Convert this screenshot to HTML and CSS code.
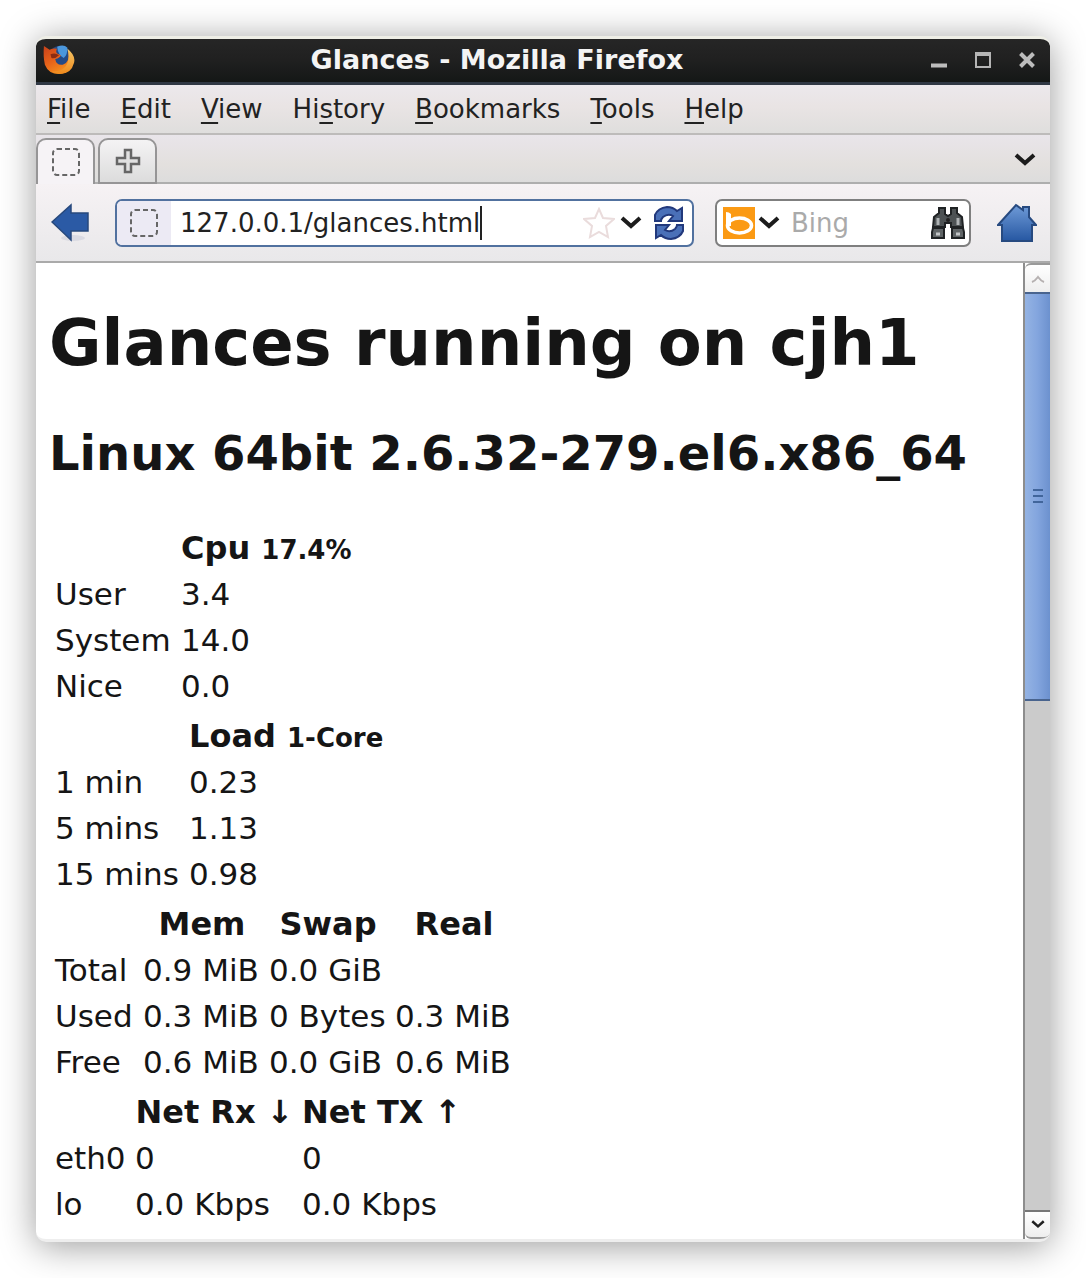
FILE: index.html
```html
<!DOCTYPE html>
<html lang="en">
<head>
<meta charset="utf-8">
<title>Glances - Mozilla Firefox</title>
<link rel="stylesheet" href="styles.css">
</head>
<body>
<div class="window">
  <header class="titlebar">
    <svg class="app-icon" width="32" height="32" viewBox="0 0 34 34" aria-hidden="true">
      <defs>
        <linearGradient id="fox" x1="0" y1="0" x2="0.6" y2="1"><stop offset="0" stop-color="#c8401a"/><stop offset="0.55" stop-color="#e8641a"/><stop offset="1" stop-color="#f5941e"/></linearGradient>
        <linearGradient id="tail" x1="0" y1="0" x2="0" y2="1"><stop offset="0" stop-color="#f3c566"/><stop offset="1" stop-color="#f08a1c"/></linearGradient>
      </defs>
      <circle cx="18" cy="14" r="12" fill="#244a86"/>
      <path d="M15 3q7-3 11 1q0 8-4 11q-6-3-7-12z" fill="#4b97dc"/>
      <path d="M1 2l6 4q4-2 8-1q-2 3 0 5l4 2q-1 3-6 4q1 7 8 6q8-2 6-15q6 8 3 15q-4 10-13 10q-11 0-15-10q-2-9-1-20z" fill="url(#fox)"/>
      <path d="M26 5q9 7 7 15q-3 12-15 12q-5 0-9-3q10 1 15-5q5-7 2-19z" fill="url(#tail)"/>
      <path d="M8 11q5-2 9 1q-4 4-8 3z" fill="#8c2c12"/>
    </svg>
    <h1 class="window-title">Glances - Mozilla Firefox</h1>
    <div class="window-controls">
      <button type="button" aria-label="Minimize"><svg width="16" height="16" viewBox="0 0 16 16"><path d="M0 13.5h16" stroke="#bdbdbd" stroke-width="4"/></svg></button>
      <button type="button" aria-label="Maximize"><svg width="16" height="16" viewBox="0 0 16 16"><path d="M1 1h14v14H1z" fill="none" stroke="#b5b5b5" stroke-width="2"/><path d="M0 2h16" stroke="#b5b5b5" stroke-width="4"/></svg></button>
      <button type="button" aria-label="Close"><svg width="16" height="16" viewBox="0 0 16 16"><path d="M1.500 1.500l13 13M14.500 1.500l-13 13" stroke="#bdbdbd" stroke-width="4"/></svg></button>
    </div>
  </header>

  <nav class="menubar">
    <a href="#"><u>F</u>ile</a>
    <a href="#"><u>E</u>dit</a>
    <a href="#"><u>V</u>iew</a>
    <a href="#">Hi<u>s</u>tory</a>
    <a href="#"><u>B</u>ookmarks</a>
    <a href="#"><u>T</u>ools</a>
    <a href="#"><u>H</u>elp</a>
  </nav>

  <div class="tabbar">
    <button type="button" class="tab tab-active" aria-label="Current tab"><svg width="28" height="28" viewBox="0 0 28 28"><rect x="1" y="1" width="26" height="26" rx="4" fill="none" stroke="#666" stroke-width="2" stroke-dasharray="5 3"/></svg></button>
    <button type="button" class="tab" aria-label="New tab"><svg width="26" height="26" viewBox="0 0 26 26"><path d="M10 2h6v8h8v6h-8v8h-6v-8H2v-6h8z" fill="#e0e0e0" stroke="#666" stroke-width="2.500"/></svg></button>
    <button type="button" class="icon-button tab-list" aria-label="List all tabs"><svg width="22" height="14" viewBox="0 0 22 14"><path d="M2 2l9 8 9-8" fill="none" stroke="#1c1c1c" stroke-width="4"/></svg></button>
  </div>

  <div class="toolbar">
    <button type="button" class="icon-button" aria-label="Back"><svg width="38" height="40" viewBox="0 0 38 40"><ellipse cx="22" cy="35" rx="12" ry="3" fill="#dadae2"/><path d="M1 19L20 2v8h17v18H20v9z" fill="#2b5aa5" stroke="#28497c" stroke-width="1.500"/></svg></button>
    <form class="field address">
      <span class="identity"><svg width="28" height="28" viewBox="0 0 28 28" aria-hidden="true"><rect x="1" y="1" width="26" height="26" rx="4" fill="none" stroke="#666" stroke-width="2" stroke-dasharray="5 3"/></svg></span>
      <span class="url"><input type="text" aria-label="Address" value="127.0.0.1/glances.html" size="1"><i class="caret"></i></span>
      <button type="button" class="icon-button bookmark" aria-label="Bookmark this page"><svg width="32" height="32" viewBox="0 0 32 32"><path d="M16 2l4 9 11 1-8 7 2 11-9-5-9 5 2-11-8-7 11-1z" fill="#fff" stroke="#eadcdc" stroke-width="2"/></svg></button>
      <button type="button" class="icon-button" aria-label="Show history"><svg width="22" height="14" viewBox="0 0 22 14"><path d="M2 2l9 8 9-8" fill="none" stroke="#1c1c1c" stroke-width="4"/></svg></button>
      <button type="button" class="icon-button reload" aria-label="Reload"><svg width="30" height="34" viewBox="0 0 30 34"><g fill="#4a70b8" stroke="#22397c" stroke-width="2"><path d="M1 15V9Q4 2 13 1q6 0 10 4l5-3v13H15l4-5q-5-3-10 1q-2 2-2 4z"/><path d="M29 19v6q-3 7-12 8q-6 0-10-4l-5 3V19h13l-4 5q5 3 10-1q2-2 2-4z"/></g></svg></button>
    </form>
    <form class="field search">
      <button type="button" class="icon-button" aria-label="Search engine"><svg width="32" height="32" viewBox="0 0 32 32"><path d="M0 0h32v32H0z" fill="#fb9a14"/><path d="M3 5q3 0 5 2v12H3z" fill="#fff"/><ellipse cx="16.500" cy="18.500" rx="12" ry="7.500" fill="none" stroke="#fff" stroke-width="3.500"/></svg></button>
      <button type="button" class="icon-button engine-list" aria-label="Choose engine"><svg width="22" height="14" viewBox="0 0 22 14"><path d="M2 2l9 8 9-8" fill="none" stroke="#1c1c1c" stroke-width="4"/></svg></button>
      <input type="text" aria-label="Search" placeholder="Bing" size="1">
      <button type="button" class="icon-button" aria-label="Find"><svg width="34" height="32" viewBox="0 0 34 32"><g stroke="#1f2224" stroke-width="2"><path d="M8 1h6v6l3 2 3-2V1h6v5l5 4 1 10H20v-4h-6v4H2l1-10 5-4z" fill="#4d5254"/><path d="M2 21h11v10H1v-6zM32 21H21v10h12v-6z" fill="#5f6466"/></g><path d="M7 11v7M27 11v7" stroke="#aeb2b4" stroke-width="3"/><path d="M5 27h4M25 27h4" stroke="#c3c6c8" stroke-width="3"/><circle cx="17" cy="13" r="2" fill="#222"/></svg></button>
    </form>
    <button type="button" class="icon-button home" aria-label="Home"><svg width="40" height="40" viewBox="0 0 40 40"><defs><linearGradient id="roof" x1="0" y1="0" x2="0" y2="1"><stop offset="0" stop-color="#6f9bd8"/><stop offset="1" stop-color="#2657a2"/></linearGradient></defs><path d="M1 22L19 2l7 5V4h6v10l7 8h-4v16H5V22z" fill="url(#roof)" stroke="#274a80" stroke-width="2"/></svg></button>
  </div>

  <div class="viewport">
    <main class="page">
      <h1>Glances running on cjh1</h1>
      <h2>Linux 64bit 2.6.32-279.el6.x86_64</h2>
      <table class="cpu">
        <tr><td></td><th scope="col">Cpu <small>17.4%</small></th></tr>
        <tr><td>User</td><td>3.4</td></tr>
        <tr><td>System</td><td>14.0</td></tr>
        <tr><td>Nice</td><td>0.0</td></tr>
      </table>
      <table class="load">
        <tr><td></td><th scope="col">Load <small>1-Core</small></th></tr>
        <tr><td>1 min</td><td>0.23</td></tr>
        <tr><td>5 mins</td><td>1.13</td></tr>
        <tr><td>15 mins</td><td>0.98</td></tr>
      </table>
      <table class="memory">
        <tr><td></td><th scope="col">Mem</th><th scope="col">Swap</th><th scope="col">Real</th></tr>
        <tr><td>Total</td><td>0.9 MiB</td><td>0.0 GiB</td><td></td></tr>
        <tr><td>Used</td><td>0.3 MiB</td><td>0 Bytes</td><td>0.3 MiB</td></tr>
        <tr><td>Free</td><td>0.6 MiB</td><td>0.0 GiB</td><td>0.6 MiB</td></tr>
      </table>
      <table class="network">
        <tr><td></td><th scope="col">Net Rx ↓</th><th scope="col">Net TX ↑</th></tr>
        <tr><td>eth0</td><td>0</td><td>0</td></tr>
        <tr><td>lo</td><td>0.0 Kbps</td><td>0.0 Kbps</td></tr>
      </table>
    </main>
    <div class="scrollbar">
      <button type="button" class="step step-up" aria-label="Scroll up"><svg width="14" height="10" viewBox="0 0 14 10"><path d="M1 8q3-1 6-5q3 4 6 5" fill="none" stroke="#b5b0b0" stroke-width="2"/></svg></button>
      <div class="track"><div class="thumb"><svg width="10" height="16" viewBox="0 0 10 16" aria-hidden="true"><path d="M0 2h10M0 8h10M0 14h10" stroke="#41659b" stroke-width="2"/></svg></div></div>
      <button type="button" class="step step-down" aria-label="Scroll down"><svg width="14" height="9" viewBox="0 0 22 14"><path d="M2 2l9 8 9-8" fill="none" stroke="#222" stroke-width="4"/></svg></button>
    </div>
  </div>
</div>
</body>
</html>
```
FILE: styles.css
```css
* { box-sizing: border-box; }

body {
  margin: 0;
  padding: 36px;
  background: #fff;
  color: #151515;
  font-family: "DejaVu Sans", Verdana, sans-serif;
}

button, input { font: inherit; color: inherit; border: 0; padding: 0; background: none; }
svg { display: block; }

.window {
  display: flex;
  flex-direction: column;
  min-height: calc(100vh - 72px);
  border-top: 3px solid #eeeee6;
  border-bottom: 3px solid #eeeeee;
  border-radius: 10px;
  overflow: hidden;
  background: #fff;
  box-shadow: 0 4px 36px rgba(0, 0, 0, 0.4);
}

.titlebar {
  display: flex;
  align-items: center;
  height: 46px;
  padding: 0 15px 2px 7px;
  border-bottom: 3px solid #303844;
  border-radius: 6px 6px 0 0;
  background: linear-gradient(#262626, #202020 50%, #141716);
}
.window-title {
  flex: 1;
  margin: 0;
  padding-right: 12px;
  color: #f4f4f4;
  font-size: 27px;
  line-height: 32px;
  text-align: center;
}
.window-controls { display: flex; gap: 28px; }

.menubar {
  display: flex;
  align-items: center;
  gap: 30px;
  height: 50px;
  padding: 0 11px;
  border-bottom: 2px solid #bdbbba;
  background: linear-gradient(#ece8ec, #e9e4e4 45%, #dfdedd);
  font-size: 26px;
}
.menubar a { color: #222; text-decoration: none; }
.menubar u { text-decoration-thickness: 2px; text-underline-offset: 4px; }

.tabbar {
  display: flex;
  align-items: flex-end;
  gap: 3px;
  height: 49px;
  padding-right: 14px;
  background: linear-gradient(#e9e5ea, #e3e0de 60%, #dcdcdc);
  box-shadow: inset 0 -2px #aeaeae;
}
.tab {
  display: grid;
  place-items: center;
  width: 59px;
  height: 46px;
  border: 2px solid #969596;
  border-radius: 10px 10px 0 0;
  background: linear-gradient(#f4f3f4, #dcdcdc);
}
.tab-active { border-bottom: 0; background: #f6f3f6; }
.tab-list { align-self: center; margin-left: auto; }

.toolbar {
  display: flex;
  align-items: center;
  height: 79px;
  padding: 0 13px 0 15px;
  border-bottom: 2px solid #aaa;
  background: linear-gradient(#f6f2f4, #e9e8ea);
}
.field {
  display: flex;
  align-items: center;
  height: 48px;
  border: 2px solid #7f7f7f;
  border-radius: 7px;
  background: #fff;
  color: #222;
  font-size: 26px;
  overflow: hidden;
}
.field input { min-width: 0; outline: 0; }
.address { flex: 1; margin-left: 26px; padding-right: 8px; border-color: #51719f; }
.identity {
  display: grid;
  place-items: center;
  width: 54px;
  height: 100%;
  background: #eceaf4;
}
.url { display: flex; flex: 1; align-items: center; padding-left: 9px; }
.url input { field-sizing: content; }
.caret { width: 2px; height: 34px; background: #222; }
.bookmark { margin-right: 5px; }
.reload { margin-left: 12px; }
.search { width: 256px; margin-left: 21px; padding: 0 4px 0 6px; }
.engine-list { margin-left: 3px; }
.search input { flex: 1; margin-left: 11px; }
.search input::placeholder { color: #aaa; opacity: 1; }
.home { margin-left: 26px; }

.viewport { display: flex; flex: 1; }
.page { flex: 1; min-width: 0; padding: 0 13px; font-size: 31px; line-height: 38px; }
.page h1 { margin: 42px 0 0; font-size: 64px; line-height: 76px; }
.page h2 { margin: 42px 0 40px; font-size: 48px; line-height: 60px; }
.page table { border-spacing: 4px; line-height: 38px; }
.page td, .page th { height: 42px; padding: 2px; white-space: nowrap; }
.page td:empty { padding: 0; }
.page th { font-size: 32px; }
.page small { font-size: 26px; line-height: 1; }
.cpu td:first-child { width: 122px; }
.load td:first-child { width: 130px; }
.memory td:first-child { width: 84px; }
.memory th { width: 122px; }
.network td:first-child { width: 76px; }
.network th { width: 163px; }

.scrollbar { display: flex; flex-direction: column; width: 27px; border-left: 2px solid #8d8d8d; }
.step { display: grid; place-items: center; height: 29px; background: linear-gradient(#fff, #eee); }
.step-up { border-radius: 6px 0 0 0; border-top: 2px solid #999; }
.step-down { border-top: 2px solid #777; border-bottom: 2px solid #999; border-radius: 0 0 6px 6px; }
.track { flex: 1; background: #cbcbcb; }
.thumb {
  display: grid;
  place-items: center;
  height: 44.5%;
  border: solid #49648e;
  border-width: 2px 0;
  background: linear-gradient(90deg, #94b3e3, #83a5de 50%, #6c91ce);
}
```
